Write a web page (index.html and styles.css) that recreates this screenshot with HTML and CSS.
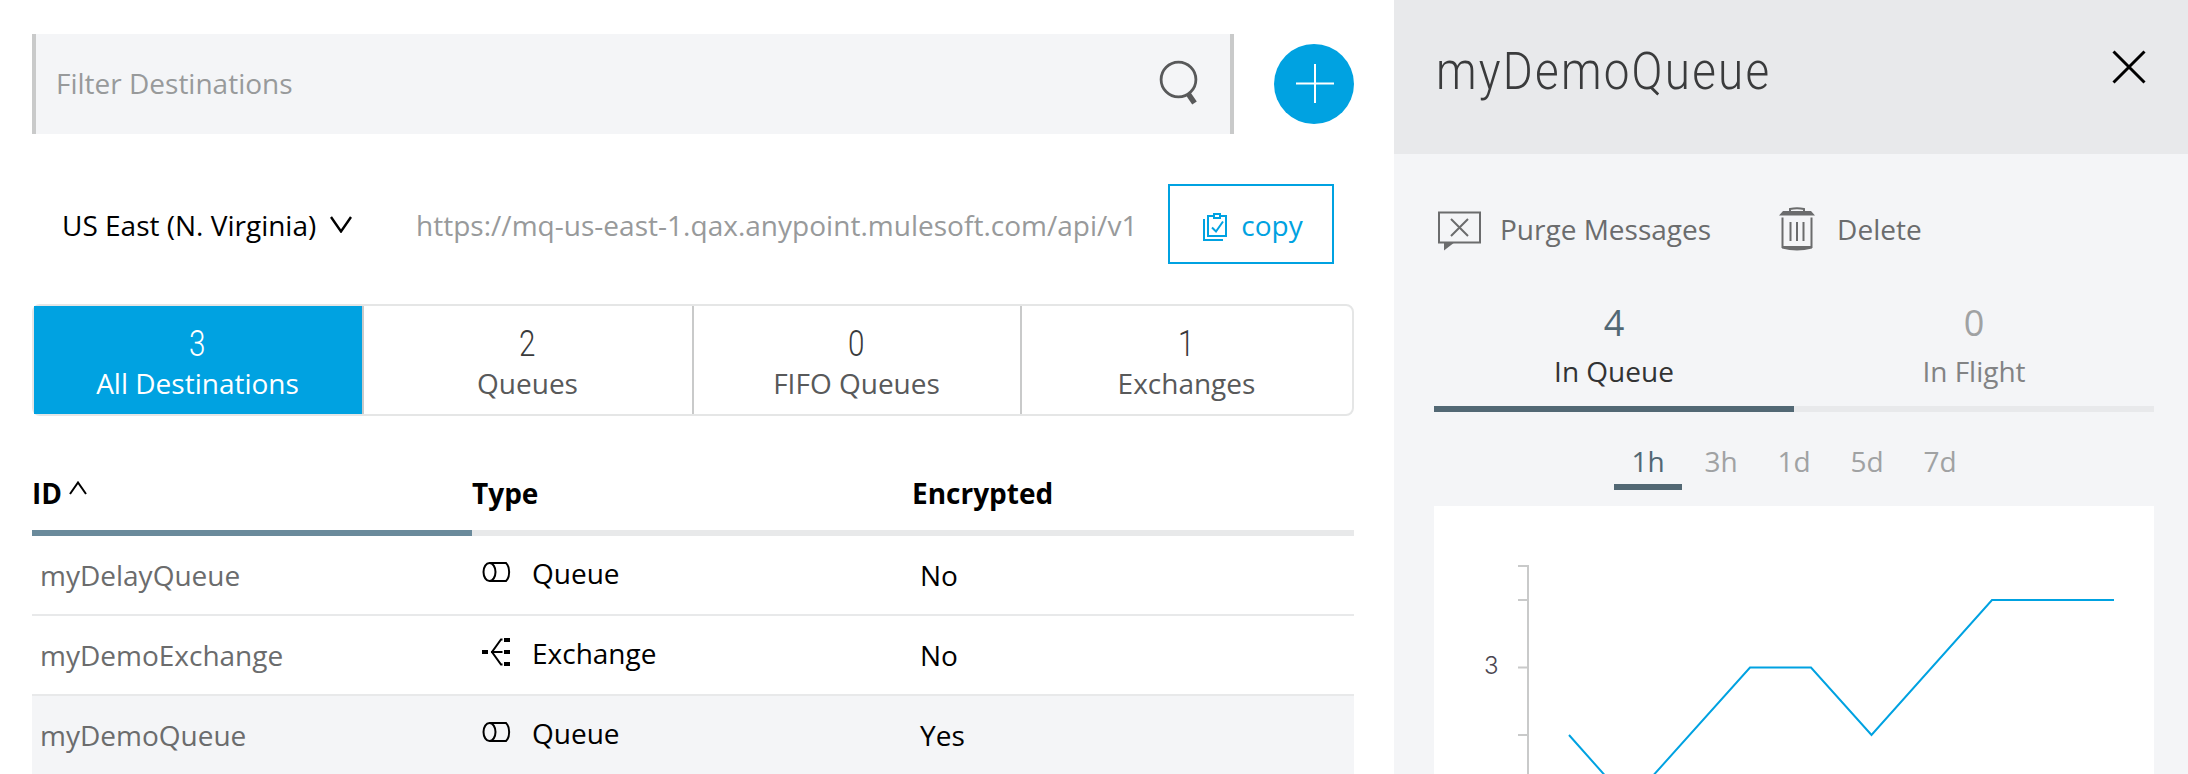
FILE: index.html
```html
<!DOCTYPE html>
<html lang="en">
<head>
<meta charset="utf-8">
<title>Destinations</title>
<link rel="stylesheet" href="styles.css">
</head>
<body>
<div class="app">
  <main class="list-pane">
    <div class="filter-row">
      <div class="filter">
        <span>Filter Destinations</span>
        <svg class="search-icon" width="40" height="46" viewBox="0 0 40 46" fill="none" stroke="#58595a"><circle cx="19.500" cy="19.500" r="17.400" stroke-width="2.800"/><path d="M29 33.500l6.500 9.500" stroke-width="5.500"/></svg>
      </div>
      <button class="add" aria-label="Add"><svg width="38" height="39" viewBox="0 0 38 39" stroke="#fff" stroke-width="2"><path d="M0 19.500h38M19 0v39"/></svg></button>
    </div>
    <div class="region-row">
      <div class="region">US East (N. Virginia)<svg width="22" height="17" viewBox="0 0 22 17" fill="none" stroke="#000" stroke-width="2.400"><path d="M1 1l10 14.500L21 1"/></svg></div>
      <div class="url">https://mq-us-east-1.qax.anypoint.mulesoft.com/api/v1</div>
      <button class="copy"><svg width="25" height="28" viewBox="0 0 25 28" fill="none" stroke="#00a2e1" stroke-width="2"><path d="M1 6v21h19M10 3H5v20h18V3h-5M11 1h6v4h-6zM9 14.500l4 4 7-10"/></svg><span>copy</span></button>
    </div>
    <div class="summary">
      <div class="cell active"><b class="num">3</b><span>All Destinations</span></div>
      <div class="cell"><b class="num">2</b><span>Queues</span></div>
      <div class="cell"><b class="num">0</b><span>FIFO Queues</span></div>
      <div class="cell"><b class="num">1</b><span>Exchanges</span></div>
    </div>
    <div class="table">
      <div class="row head"><div class="sorted">ID<svg width="18" height="14" viewBox="0 0 18 14" fill="none" stroke="#000" stroke-width="2"><path d="M1 13l8-11.500L17 13"/></svg></div><div>Type</div><div>Encrypted</div></div>
      <div class="row"><div class="id">myDelayQueue</div><div class="type"><svg width="30" height="28" viewBox="0 0 30 28" fill="none" stroke="#000" stroke-width="2"><ellipse cx="7.500" cy="14" rx="6" ry="9"/><path d="M7.500 5H24c4.200 4 4.200 14 0 18H7.500"/></svg>Queue</div><div>No</div></div>
      <div class="row"><div class="id">myDemoExchange</div><div class="type"><svg width="30" height="28" viewBox="0 0 30 28" fill="none" stroke="#000" stroke-width="2"><path d="M20.500 1.500H19L10 14l9 12.500h1.500M9 14h11.500"/><path d="M0 12h6v4H0zM22 0h6v4h-6zM22 12h6v4h-6zM22 24h6v4h-6z" fill="#000" stroke="none"/></svg>Exchange</div><div>No</div></div>
      <div class="row selected"><div class="id">myDemoQueue</div><div class="type"><svg width="30" height="28" viewBox="0 0 30 28" fill="none" stroke="#000" stroke-width="2"><ellipse cx="7.500" cy="14" rx="6" ry="9"/><path d="M7.500 5H24c4.200 4 4.200 14 0 18H7.500"/></svg>Queue</div><div>Yes</div></div>
    </div>
  </main>
  <aside class="detail">
    <header class="detail-head">
      <h1>myDemoQueue</h1>
      <svg width="34" height="34" viewBox="0 0 34 34" stroke="#000" stroke-width="3"><path d="M1.500 1.500l31 31M32.500 1.500l-31 31"/></svg>
    </header>
    <div class="actions">
      <div class="action purge"><svg width="44" height="40" viewBox="0 0 44 40" fill="none" stroke="#6b6c6d" stroke-width="2"><path d="M1 1.500h41v30H1zM13 8l17 17M30 8L13 25"/><path d="M6 31h11L6 39.500z" fill="#6b6c6d" stroke="none"/></svg>Purge Messages</div>
      <div class="action"><svg width="38" height="44" viewBox="0 0 38 44" fill="none" stroke="#6b6c6d" stroke-width="2"><path d="M12 5V2q7-1.500 14 0V5M4.500 10.500V40h29V10.500M12.500 15v19M19 15v19M25.500 15v19"/><path d="M5 4h28l4 4.500H1zM4 39h30v2.500q-15 4-30 0z" fill="#6b6c6d" stroke="none"/></svg>Delete</div>
    </div>
    <div class="stats">
      <div class="stat on"><b>4</b><span>In Queue</span></div>
      <div class="stat"><b>0</b><span>In Flight</span></div>
    </div>
    <div class="ranges"><span class="on">1h</span><span>3h</span><span>1d</span><span>5d</span><span>7d</span></div>
    <div class="chart">
      <svg width="720" height="268" viewBox="0 0 720 268" fill="none">
        <path d="M84 60h10v208M84 94h10M84 161.500h10M84 229h10" stroke="#c9caca" stroke-width="2"/>
        <polyline points="135,229 195,296.500 316,161.500 377,161.500 437.500,229 558,94 680,94" stroke="#00a2e1" stroke-width="2"/>
        <text x="50" y="168" class="tick">3</text>
      </svg>
    </div>
  </aside>
</div>
</body>
</html>
```
FILE: styles.css
```css
* { box-sizing: border-box; }
body { margin: 0; background: #fff; color: #000; font: 28px/38px "Open Sans", sans-serif; }
button { font: inherit; }
svg { display: block; flex: none; }
.app { display: grid; grid-template-columns: 1394px 794px; height: 774px; overflow: hidden; }
.list-pane { padding: 34px 40px 0 32px; }
.filter-row { display: flex; align-items: center; justify-content: space-between; height: 100px; }
.filter { width: 1202px; height: 100px; display: flex; align-items: center; justify-content: space-between; padding: 0 31px 2px 20px; background: #f4f5f7; border: solid #c9caca; border-width: 0 4px; color: #989a9b; }
.search-icon { margin-top: -1px; }
.add { width: 80px; height: 80px; border: 0; padding: 0 0 2px 2px; border-radius: 50%; background: #00a2e1; display: flex; align-items: center; justify-content: center; }
.region-row { display: flex; align-items: center; height: 80px; margin-top: 50px; padding-left: 30px; }
.region { width: 354px; display: flex; align-items: center; gap: 14px; padding-top: 2px; }
.region svg { margin-top: -2px; }
.url { color: #989a9b; flex: 1; padding-top: 2px; letter-spacing: .02px; }
.copy { width: 166px; height: 80px; margin-right: 20px; padding: 2px 0 0 4px; border: 2px solid #00a2e1; background: #fff; color: #00a2e1; display: flex; align-items: center; justify-content: center; gap: 13px; }
.copy svg { margin-top: 3px; }
.summary { display: grid; grid-template-columns: 330px 330px 328px 330px; height: 112px; margin-top: 40px; border: 2px solid #e5e6e6; border-radius: 8px; }
.cell { display: flex; flex-direction: column; align-items: center; padding: 18px 1px 0 0; color: #58595a; border-right: 2px solid #c9caca; }
.cell:last-child { border-right: 0; }
.cell.active { background: #00a2e1; color: #fff; }
.num { font: 300 37px/40px Roboto, sans-serif; color: #3a3b3c; transform: scaleX(.8); }
.active .num { color: #fff; }
.table { margin-top: 40px; }
.row { display: grid; grid-template-columns: 440px 440px 442px; height: 80px; border-bottom: 2px solid #e8e9ea; align-items: center; }
.row > div { padding-left: 8px; }
.row > .type { padding: 0 0 4px 10px; display: flex; gap: 20px; }
.type svg { margin-top: 4px; }
.row.head > div { height: 80px; padding: 18px 0 0; border-bottom: 6px solid #e8e9ea; font-weight: 700; }
.row.head { border: 0; }
.row.head > .sorted { display: flex; gap: 7px; border-color: #6a8a9b; }
.sorted svg { margin-top: 7px; }
.id { color: #6b6c6d; }
.selected { background: #f4f5f7; }
.detail { background: #f4f5f7; }
.detail-head { height: 154px; background: #e8e9eb; display: flex; justify-content: space-between; padding: 50px 42px 0 42px; }
.detail-head h1 { margin: -8px 0 0; font: 300 51px/60px Roboto, sans-serif; letter-spacing: 2.5px; color: #3a3b3c; transform: scaleX(.897); transform-origin: left; }
.actions { display: flex; gap: 67px; height: 76px; padding-left: 44px; align-items: center; margin-top: 37px; color: #6b6c6d; }
.action { display: flex; align-items: center; gap: 21px; }
.action.purge { gap: 18px; }
.purge svg { margin-top: 3px; }
.stats { display: grid; grid-template-columns: 1fr 1fr; margin: 35px 34px 0 40px; height: 110px; }
.stat { display: flex; flex-direction: column; align-items: center; border-bottom: 6px solid #e8e9eb; color: #828384; }
.stat b { font-weight: 400; font-size: 36px; line-height: 42px; color: #a0a2a3; }
.stat span { margin-top: 8px; }
.stat.on { color: #323334; border-color: #526874; }
.stat.on b { color: #526874; }
.ranges { display: flex; gap: 5px; padding-left: 6px; justify-content: center; margin: 30px 0 0; height: 48px; color: #a0a2a3; }
.ranges span { width: 68px; text-align: center; height: 48px; }
.ranges .on { color: #526874; border-bottom: 6px solid #526874; }
.chart { width: 720px; height: 268px; margin: 16px 0 0 40px; background: #fff; }
.tick { font: 300 24px "Inter", sans-serif; fill: #4a4550; }
```
